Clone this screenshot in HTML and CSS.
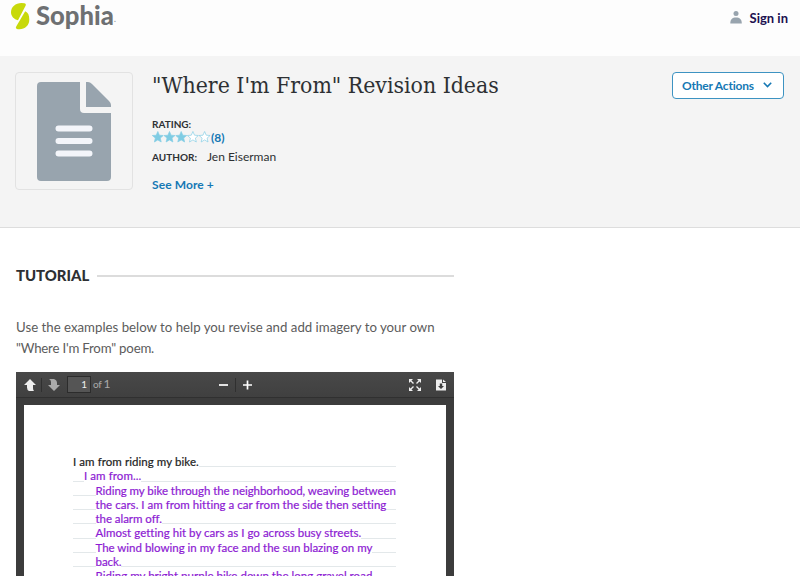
FILE: index.html
```html
<!doctype html>
<html lang="en">

<head>
    <meta charset="utf-8">
    <title>"Where I'm From" Revision Ideas</title>
    <link rel="stylesheet" href="styles.css">
</head>

<body>
    <header class="topbar">
        <a class="logo">
            <svg class="logo-mark" width="19" height="27" viewBox="0 0 19 27" fill="#c8d90b">
                <path d="M13.500 .3 Q15.500 .8 14.700 2.600 L7 17.300 C3 16.200 0 13.500 0 9.300 C0 4 4.500 0 10.500 0 Q12.500 0 13.500 .3Z" />
                <path d="M14.200 8.300 C17 9.500 18.300 12 18.300 16.500 C18.300 22.500 14 26.200 8.500 26.200 Q6.500 26.200 5.500 25.700 Q4.300 25 5.200 23.500Z" />
            </svg>
            <span class="logo-text">Sophia</span><span class="logo-dot">.</span>
        </a>
        <a class="signin">
            <svg width="13" height="13" viewBox="0 0 13 13" fill="#98a4ae">
                <circle cx="6" cy="2.500" r="2.500" />
                <path d="M.3 12.500 C.3 8.500 2.300 6.600 6 6.600 C9.700 6.600 11.800 8.500 11.800 12.500Z" />
            </svg>
            <span class="signin-text">Sign in</span>
        </a>
    </header>

    <section class="hero">
        <div class="thumb">
            <svg width="74" height="99" viewBox="0 0 74 99">
                <path d="M4 0 H43 V27 Q43 31 47 31 H74 V95 Q74 99 70 99 H4 Q0 99 0 95 V4 Q0 0 4 0Z" fill="#98a4ae" />
                <path d="M49 0 H51 Q53 0 55 2 L72 19 Q74 21 74 23 V25 H49Z" fill="#98a4ae" />
                <path d="M21.500 46.500 H52.500 M21.500 59 H52.500 M21.500 71.500 H52.500" stroke="#f3f5fa" stroke-width="6" stroke-linecap="round" />
            </svg>
        </div>
        <div class="info">
            <h1 class="title">"Where I'm From" Revision Ideas</h1>
            <div class="label rating-label">RATING:</div>
            <div class="rating">
                <svg width="59" height="12" viewBox="0 0 59 12" stroke="#87cee5" stroke-width=".7">
                    <defs>
                        <path id="star" d="M5.800 .5 L7.400 4.200 L11.300 4.500 L8.300 7.100 L9.200 11 L5.800 8.900 L2.400 11 L3.300 7.100 L.3 4.500 L4.200 4.200Z" />
                    </defs>
                    <use href="#star" fill="#7fcce3" />
                    <use href="#star" x="11.700" fill="#7fcce3" />
                    <use href="#star" x="23.400" fill="#7fcce3" />
                    <use href="#star" x="35.100" fill="#fff" />
                    <use href="#star" x="46.800" fill="#fff" />
                </svg>
                <span class="count">(8)</span>
            </div>
            <div class="author">
                <span class="label">AUTHOR:</span>
                <span class="author-name">Jen Eiserman</span>
            </div>
            <a class="more">See More +</a>
        </div>
        <button class="actions">
            <span class="actions-text">Other Actions</span>
            <svg width="9" height="6" viewBox="0 0 9 6" fill="none" stroke="#1578b4" stroke-width="1.600">
                <path d="M.8 .8 L4.500 4.500 L8.200 .8" />
            </svg>
        </button>
    </section>

    <main class="tutorial">
        <h2 class="section-title">TUTORIAL</h2>
        <p class="intro">Use the examples below to help you revise and add imagery to your own<br><span class="intro-end">"Where I'm From" poem.</span></p>

        <div class="viewer">
            <div class="toolbar">
                <svg class="up" width="12" height="12" viewBox="0 0 12 12" fill="#eee">
                    <path d="M6 0 L12 6 H9 V9 Q9 11 10 12 H5 Q3 11 3 8.500 V6 H0Z" />
                </svg>
                <i class="sep"></i>
                <svg class="down" width="12" height="12" viewBox="0 0 12 12" fill="#aaa">
                    <path d="M6 12 L12 6 H9 V4 Q9 1 6 0 H1 Q3 1 3 3 V6 H0Z" />
                </svg>
                <span class="page-number">1</span>
                <span class="page-of">of <b>1</b></span>
                <svg class="minus" width="9" height="10" viewBox="0 0 9 10" stroke="#fff" stroke-width="1.700">
                    <path d="M0 5 H9" />
                </svg>
                <i class="sep"></i>
                <svg class="plus" width="9" height="10" viewBox="0 0 9 10" stroke="#fff" stroke-width="1.700">
                    <path d="M0 5 H9 M4.500 .5 V9.500" />
                </svg>
                <svg class="full" width="12" height="12" viewBox="0 0 12 12" fill="#eee" stroke="#eee" stroke-width="1.400">
                    <path d="M0 0H4L0 4Z M12 0V4L8 0Z M0 12V8L4 12Z M12 12H8L12 8Z" stroke="none" />
                    <path d="M1 1L4.500 4.500 M11 1L7.500 4.500 M1 11L4.500 7.500 M11 11L7.500 7.500" />
                </svg>
                <svg class="download" width="10" height="12" viewBox="0 0 10 12">
                    <path d="M0 .5H6V4H10V11.500H0Z" fill="#eee" />
                    <path d="M7 .5L10 3H7Z" fill="#eee" />
                    <path d="M3.800 4.500H6.200V7H8L5 10L2 7H3.800Z" fill="#3f3f3f" />
                </svg>
            </div>
            <div class="paper">
                <div class="line first"><span>I am from riding my bike.</span></div>
                <div class="line second"><span>I am from...</span></div>
                <div class="line tight"><span>Riding my bike through the neighborhood, weaving between</span></div>
                <div class="line"><span>the cars. I am from hitting a car from the side then setting</span></div>
                <div class="line tight"><span>the alarm off.</span></div>
                <div class="line"><span>Almost getting hit by cars as I go across busy streets.</span></div>
                <div class="line snug"><span>The wind blowing in my face and the sun blazing on my</span></div>
                <div class="line tight"><span>back.</span></div>
                <div class="line"><span>Riding my bright purple bike down the long gravel road</span></div>
            </div>
        </div>
    </main>
</body>

</html>
```
FILE: styles.css
```css
* {
    box-sizing: border-box;
}

body {
    margin: 0;
    height: 576px;
    overflow: hidden;
    background: #fff;
    color: #2d3033;
    font-family: Lato, "Open Sans", sans-serif;
    font-size: 12px;
}

svg {
    display: block;
    flex: none;
}

.topbar {
    display: flex;
    justify-content: space-between;
    height: 56px;
    padding: 3px 12px 0 11px;
    background: #fdfdfd;
}

.logo {
    display: flex;
    align-items: flex-start;
}

.logo-text {
    margin: -4px 0 0 6px;
    color: #6e7072;
    font-size: 25.600px;
    line-height: 32px;
    font-weight: 900;
}

.logo-dot {
    color: #999;
    font-size: 10px;
    line-height: 31px;
}

.signin {
    display: flex;
    gap: 7px;
    padding-top: 8px;
    color: #20104f;
    font-size: 13px;
    font-weight: 700;
    line-height: 14px;
}

.hero {
    display: flex;
    align-items: flex-start;
    height: 172px;
    padding: 16px 16px 0 15px;
    background: #f4f4f4;
    border-bottom: 1px solid #ddd;
}

.thumb {
    width: 118px;
    height: 118px;
    padding: 9px 0 0 21px;
    border: 1px solid #e2e2e2;
    border-radius: 4px;
}

.info {
    flex: 1;
    margin-left: 19px;
}

.title {
    margin: -2px 0 0;
    font-family: "DejaVu Serif Condensed", "DejaVu Serif", serif;
    font-size: 22.800px;
    line-height: 30px;
    font-weight: 400;
    white-space: nowrap;
}

.label {
    font-size: 10px;
    line-height: 14px;
    font-weight: 700;
}

.rating-label {
    margin-top: 17px;
}

.rating {
    display: flex;
    height: 13px;
    color: #1578b4;
    font-weight: 700;
    line-height: 13px;
}

.author {
    display: flex;
    gap: 10px;
    align-items: baseline;
    margin-top: 5px;
    line-height: 16px;
}

.more {
    display: block;
    margin-top: 12px;
    color: #1578b4;
    font-weight: 700;
    letter-spacing: .1px;
    line-height: 16px;
}

.actions {
    display: flex;
    align-items: center;
    gap: 9px;
    width: 112px;
    height: 27px;
    padding: 0 0 1px 9px;
    border: 1px solid #3d93c2;
    border-radius: 4px;
    background: #fff;
    color: #1578b4;
    font: 700 12px Lato, sans-serif;
    letter-spacing: -.2px;
    white-space: nowrap;
}

.tutorial {
    width: 438px;
    margin-left: 16px;
}

.section-title {
    display: flex;
    align-items: center;
    gap: 8px;
    margin: 38px 0 0;
    font-size: 14.900px;
    line-height: 19px;
    font-weight: 900;
}

.section-title::after {
    content: "";
    flex: 1;
    height: 2px;
    background: #dcdcdc;
}

.intro {
    margin: 32px 0 0;
    color: #5c5c5c;
    font-size: 13.240px;
    line-height: 21px;
    white-space: nowrap;
}

.intro-end {
    letter-spacing: -.2px;
}

.viewer {
    height: 204px;
    margin-top: 13px;
    padding: 0 8px;
    overflow: hidden;
    background: #3c3c3c;
}

.toolbar {
    display: flex;
    align-items: center;
    height: 26px;
    margin: 0 -8px 7px;
    padding: 0 8px;
    border-bottom: 1px solid #303030;
    background: linear-gradient(#484848, #404040);
}

.sep {
    width: 1px;
    height: 14px;
    background: #303030;
}

.up {
    margin-right: 5px;
}

.down {
    margin: 0 7px 0 6px;
}

.page-number {
    width: 24px;
    height: 17px;
    padding-right: 3px;
    border: 1px solid #2c2c2c;
    background: #555;
    color: #eee;
    font-size: 10px;
    line-height: 15px;
    text-align: right;
}

.page-of {
    margin: -3px 0 0 2px;
    color: #aaa;
    font-size: 10px;
    letter-spacing: -.3px;
}

.page-of b {
    font-size: 12px;
    font-weight: 400;
}

.minus {
    margin: 0 7px 0 auto;
}

.plus {
    margin: 0 157px 0 7px;
}

.download {
    margin-left: 15px;
}

.paper {
    height: 200px;
    padding: 48px 50px 0 49px;
    background: #fff;
}

.line {
    height: 14.300px;
    padding-left: 22.500px;
    border-bottom: 1px solid #e3e8ea;
    color: #8d1bd3;
    font-size: 11.500px;
    letter-spacing: .030px;
    line-height: 18px;
    white-space: nowrap;
}

.line span {
    background: #fff;
    -webkit-text-stroke: .2px;
}

.first {
    padding-left: 0;
    color: #222;
    letter-spacing: .070px;
}

.second {
    padding-left: 11px;
    letter-spacing: .080px;
}

.tight {
    letter-spacing: -.050px;
}

.snug {
    letter-spacing: -.010px;
}
```
